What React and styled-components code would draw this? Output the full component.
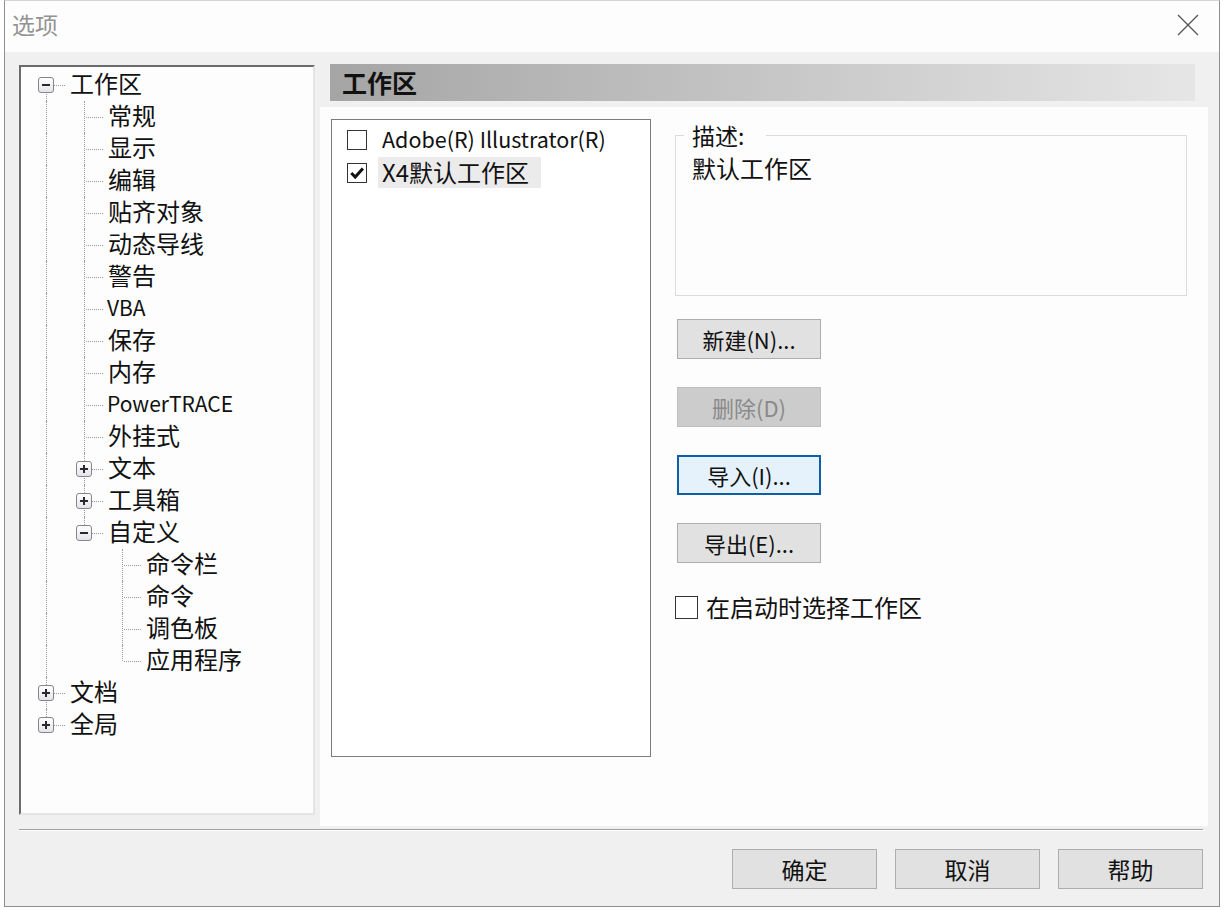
import React from 'react';
import styled, { createGlobalStyle, css } from 'styled-components';

const GlobalStyle = createGlobalStyle`
  html, body {
    margin: 0;
    padding: 0;
    background: #ffffff;
  }
  body {
    font-family: "Noto Sans CJK SC", "Noto Sans", sans-serif;
    color: #111;
  }
  * {
    box-sizing: border-box;
  }
`;

const Window = styled.div`
  margin-left: 4px;
  width: 1216px;
  height: 907px;
  border: 1px solid #8e8e8e;
  border-top-color: #d4d4d4;
  display: flex;
  flex-direction: column;
`;

const TitleBar = styled.header`
  height: 51px;
  flex: none;
  background: #fdfdfd;
  display: flex;
  align-items: center;
  justify-content: space-between;
  padding: 0 20px 0 7px;
`;

const Title = styled.span`
  font-size: 23px;
  line-height: 28px;
  color: #939393;
  margin-top: -5px;
`;

const CloseButton = styled.button`
  border: 0;
  background: none;
  padding: 0;
  width: 22px;
  height: 22px;
  margin-top: -3px;
  display: flex;

  svg {
    display: block;
  }
`;

const Body = styled.div`
  flex: 1;
  background: #f0f0f0;
  display: flex;
  flex-direction: column;
  padding: 12px 11px 0 14px;
`;

const Main = styled.div`
  display: flex;
  gap: 5px;
  height: 762px;
`;

const TreePanel = styled.div`
  width: 296px;
  height: 750px;
  margin-top: 1px;
  flex: none;
  background: #fdfdfd;
  border: 2px solid;
  border-color: #6b6b6b #e4e4e4 #e4e4e4 #6b6b6b;
  padding: 2px 0 0 6px;
`;

const TreeRow = styled.div`
  display: flex;
  height: 32px;
`;

const Guide = styled.span`
  position: relative;
  width: 38px;
  flex: none;

  ${(p) =>
    (p.$up || p.$down) &&
    css`
      &::before {
        content: '';
        position: absolute;
        left: 19px;
        top: ${p.$up ? '0' : '16px'};
        bottom: ${p.$down ? '0' : '16px'};
        border-left: 1px dotted #9a9a9a;
      }
    `}

  ${(p) =>
    p.$branch &&
    css`
      &::after {
        content: '';
        position: absolute;
        left: 21px;
        right: 0;
        top: 16px;
        border-top: 1px dotted #9a9a9a;
      }
    `}
`;

const Expander = styled.span`
  position: absolute;
  left: 11px;
  top: 8px;
  width: 16px;
  height: 16px;
  border: 1px solid #85858f;
  border-radius: 3px;
  background: linear-gradient(#ffffff, #e4e4ea);
  z-index: 1;

  &::before {
    content: '';
    position: absolute;
    left: 3px;
    right: 3px;
    top: 6px;
    height: 2px;
    background: #2a2a2a;
  }

  ${(p) =>
    p.$plus &&
    css`
      &::after {
        content: '';
        position: absolute;
        top: 3px;
        bottom: 3px;
        left: 6px;
        width: 2px;
        background: #2a2a2a;
      }
    `}
`;

const TreeLabel = styled.span`
  margin-left: ${(p) => (p.$latin ? 4 : 5)}px;
  font-size: ${(p) => (p.$latin ? 21 : 24)}px;
  line-height: 28px;
  white-space: nowrap;
`;

const Page = styled.section`
  flex: 1;
  display: flex;
  flex-direction: column;
  gap: 6px;
`;

const PageHeader = styled.h2`
  margin: 0 13px 0 10px;
  height: 37px;
  flex: none;
  padding-left: 12px;
  background: linear-gradient(to right, #a5a5a5, #e6e6e6);
  font-size: 25px;
  font-weight: 700;
  line-height: 36px;
  color: #111;
`;

const PageContent = styled.div`
  flex: 1;
  background: #fdfdfd;
  display: flex;
  align-items: flex-start;
  padding: 12px 0 0 11px;
`;

const ListBox = styled.ul`
  list-style: none;
  margin: 0;
  width: 320px;
  height: 638px;
  flex: none;
  border: 1px solid #7c7c7c;
  background: #ffffff;
  padding: 3px 0 0 15px;
`;

const ListItem = styled.li`
  display: flex;
  align-items: center;
  height: 33px;
`;

const CheckBox = styled.span`
  width: ${(p) => p.$size}px;
  height: ${(p) => p.$size}px;
  flex: none;
  border: 1px solid #333;
  background: #fff;
  display: flex;
  align-items: center;
  justify-content: center;
`;

const ItemLabel = styled.span`
  margin-left: 11px;
  padding: 0 ${(p) => (p.$selected ? 12 : 4)}px 0 4px;
  height: 31px;
  font-size: ${(p) => (p.$latin ? 21.5 : 24)}px;
  line-height: 30px;
  white-space: nowrap;
  background: ${(p) => (p.$selected ? '#ebebeb' : 'transparent')};
`;

const Side = styled.div`
  margin-left: 24px;
  width: 512px;
  padding-top: 4px;
  display: flex;
  flex-direction: column;
  align-items: flex-start;
`;

const Group = styled.fieldset`
  width: 512px;
  height: 173px;
  margin: 0 0 23px;
  padding: 8px 8px 0;
  border: 1px solid #dcdcdc;
`;

const Legend = styled.legend`
  padding: 0 22px 0 8px;
  font-size: 23px;
  line-height: 24px;
`;

const GroupText = styled.p`
  margin: 0 0 0 8px;
  font-size: 24px;
  line-height: 26px;
`;

const ActionButton = styled.button`
  width: 144px;
  height: 40px;
  margin: 0 0 ${(p) => p.$gap ?? 28}px 2px;
  padding: 0;
  font-family: inherit;
  font-size: 22px;
  color: #111;
  background: #e1e1e1;
  border: 1px solid #adadad;

  &:disabled {
    background: #cccccc;
    border-color: #bfbfbf;
    color: #8a8a8a;
  }

  ${(p) =>
    p.$focused &&
    css`
      background: #e5f1fb;
      border: 2px solid #0f5fa8;
    `}
`;

const StartupOption = styled.label`
  display: flex;
  align-items: center;
  gap: 8px;
  font-size: 24px;
  line-height: 26px;
`;

const Separator = styled.hr`
  margin: 3px 5px 0 0;
  height: 0;
  border: 0;
  border-top: 1px solid #a0a0a0;
  border-bottom: 1px solid #ffffff;
`;

const Footer = styled.div`
  display: flex;
  justify-content: flex-end;
  gap: 18px;
  padding: 18px 5px 0 0;
`;

const DialogButton = styled.button`
  width: 145px;
  height: 40px;
  padding: 0;
  font-family: inherit;
  font-size: 23px;
  color: #111;
  background: #e1e1e1;
  border: 1px solid #adadad;
`;

const tree = [
  {
    label: '工作区',
    open: true,
    children: [
      { label: '常规' },
      { label: '显示' },
      { label: '编辑' },
      { label: '贴齐对象' },
      { label: '动态导线' },
      { label: '警告' },
      { label: 'VBA', latin: true },
      { label: '保存' },
      { label: '内存' },
      { label: 'PowerTRACE', latin: true },
      { label: '外挂式' },
      { label: '文本', more: true },
      { label: '工具箱', more: true },
      {
        label: '自定义',
        open: true,
        children: [
          { label: '命令栏' },
          { label: '命令' },
          { label: '调色板' },
          { label: '应用程序' },
        ],
      },
    ],
  },
  { label: '文档', more: true },
  { label: '全局', more: true },
];

// flat rows with the dotted guide lines each one needs
function flatten(nodes, depth = 0, trail = [], out = []) {
  nodes.forEach((node, i) => {
    const isLast = i === nodes.length - 1;
    out.push({
      label: node.label,
      latin: node.latin,
      trail,
      up: !(depth === 0 && i === 0),
      down: !isLast,
      expander: node.open ? 'minus' : node.more ? 'plus' : null,
    });
    if (node.open) flatten(node.children, depth + 1, [...trail, !isLast], out);
  });
  return out;
}

const rows = flatten(tree);

function CheckMark() {
  return (
    <svg width="16" height="16" viewBox="0 0 16 16">
      <path d="M2.3 8 L6.2 12 L13.9 3.4" fill="none" stroke="#111" strokeWidth="3" />
    </svg>
  );
}

export default function App() {
  return (
    <>
      <GlobalStyle />
      <Window>
        <TitleBar>
          <Title>选项</Title>
          <CloseButton aria-label="关闭">
            <svg width="22" height="22" viewBox="0 0 22 22">
              <path d="M1 1 L21 21 M21 1 L1 21" stroke="#555" strokeWidth="1.3" />
            </svg>
          </CloseButton>
        </TitleBar>
        <Body>
          <Main>
            <TreePanel>
              {rows.map((row, i) => (
                <TreeRow key={i}>
                  {row.trail.map((hasNext, j) => (
                    <Guide key={j} $up={hasNext} $down={hasNext} />
                  ))}
                  <Guide $up={row.up} $down={row.down} $branch>
                    {row.expander && <Expander $plus={row.expander === 'plus'} />}
                  </Guide>
                  <TreeLabel $latin={row.latin}>{row.label}</TreeLabel>
                </TreeRow>
              ))}
            </TreePanel>
            <Page>
              <PageHeader>工作区</PageHeader>
              <PageContent>
                <ListBox>
                  <ListItem>
                    <CheckBox $size={20} />
                    <ItemLabel $latin>Adobe(R) Illustrator(R)</ItemLabel>
                  </ListItem>
                  <ListItem>
                    <CheckBox $size={20}>
                      <CheckMark />
                    </CheckBox>
                    <ItemLabel $selected>X4默认工作区</ItemLabel>
                  </ListItem>
                </ListBox>
                <Side>
                  <Group>
                    <Legend>描述:</Legend>
                    <GroupText>默认工作区</GroupText>
                  </Group>
                  <ActionButton>新建(N)...</ActionButton>
                  <ActionButton disabled>删除(D)</ActionButton>
                  <ActionButton $focused>导入(I)...</ActionButton>
                  <ActionButton $gap={31}>导出(E)...</ActionButton>
                  <StartupOption>
                    <CheckBox $size={23} />
                    在启动时选择工作区
                  </StartupOption>
                </Side>
              </PageContent>
            </Page>
          </Main>
          <Separator />
          <Footer>
            <DialogButton>确定</DialogButton>
            <DialogButton>取消</DialogButton>
            <DialogButton>帮助</DialogButton>
          </Footer>
        </Body>
      </Window>
    </>
  );
}
